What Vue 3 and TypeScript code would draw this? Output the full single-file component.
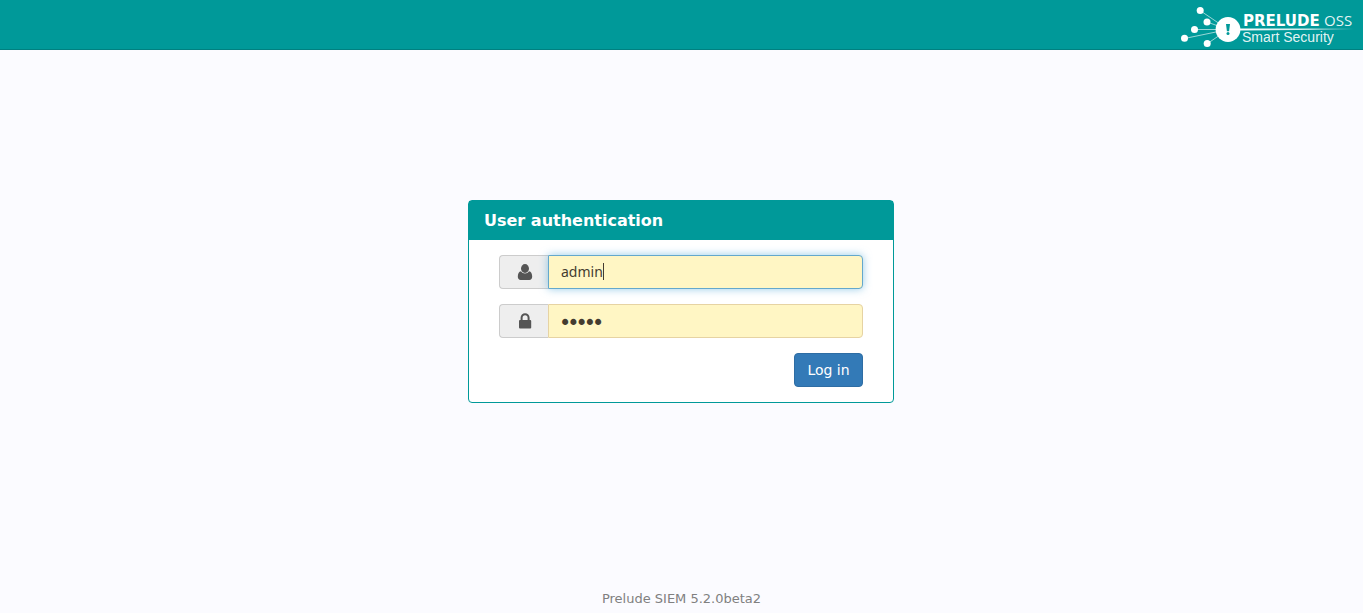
<script setup lang="ts">
import { onMounted, ref } from 'vue'

const username = ref<string>('admin')
const password = ref<string>('admin')
const userField = ref<HTMLInputElement | null>(null)
const version = '5.2.0beta2'

onMounted(() => {
  const field = userField.value
  if (field) {
    field.focus()
    field.setSelectionRange(field.value.length, field.value.length)
  }
})
</script>

<template>
  <div class="page">
    <header class="topbar">
      <svg class="logo" width="174" height="49" viewBox="0 0 174 49" role="img" aria-label="Prelude OSS Smart Security">
        <defs>
          <linearGradient id="rule" x1="0" x2="1" y1="0" y2="0">
            <stop offset="0" stop-color="#fff" />
            <stop offset="0.6" stop-color="#fff" stop-opacity="0.8" />
            <stop offset="1" stop-color="#fff" stop-opacity="0" />
          </linearGradient>
        </defs>
        <g stroke="#fff" stroke-width="0.8" stroke-opacity="0.75">
          <path d="M20 10.500L48 29.500M27 22L48 29.500M14.500 29.500H48M4.500 38.500L48 29.500M27.500 43.500L48 29.500" />
        </g>
        <g fill="#fff">
          <circle cx="20.200" cy="10.500" r="3.500" />
          <circle cx="27" cy="22" r="3.500" />
          <circle cx="14.500" cy="29.500" r="3.500" />
          <circle cx="4.500" cy="38.300" r="3.500" />
          <circle cx="27.200" cy="43.500" r="3.500" />
          <circle cx="48" cy="29.500" r="12.400" />
        </g>
        <path d="M46 24h4l-0.900 7.300h-2.200z" fill="#009999" />
        <circle cx="48" cy="33.600" r="1.500" fill="#009999" />
        <path d="M60 28.500H174V29.500L60 30.500z" fill="url(#rule)" />
        <text class="brand" x="63" y="26">PRELUDE</text>
        <text class="edition" x="144" y="26">OSS</text>
        <text class="tagline" x="62" y="42">Smart Security</text>
      </svg>
    </header>

    <main class="content">
      <form class="panel" @submit.prevent>
        <h1 class="panel-heading">User authentication</h1>
        <div class="panel-body">
          <div class="group">
            <label class="addon" for="login" aria-label="Login">
              <svg width="16" height="16" viewBox="0 0 16 16" aria-hidden="true">
                <ellipse cx="8" cy="4.500" rx="4" ry="4.400" />
                <path d="M4 7.200C1.800 7.600 0.800 9.800 0.800 12.800C0.800 14.800 2 16 3.600 16H12.400C14 16 15.200 14.800 15.200 12.800C15.200 9.800 14.200 7.600 12 7.200C11 8.800 9.500 9.400 8 9.400S5 8.800 4 7.200z" />
              </svg>
            </label>
            <input id="login" ref="userField" v-model="username" class="field field-login" type="text" autocomplete="username" />
          </div>
          <div class="group">
            <label class="addon" for="password" aria-label="Password">
              <svg width="16" height="16" viewBox="0 0 16 16" aria-hidden="true">
                <path d="M4.600 8V4.800a3.500 3.600 0 0 1 7 0V8" fill="none" stroke="#555" stroke-width="2" />
                <rect x="2" y="7" width="12.200" height="8.500" rx="1" />
              </svg>
            </label>
            <input id="password" v-model="password" class="field field-password" type="password" autocomplete="current-password" />
          </div>
          <div class="actions">
            <button class="submit" type="submit">Log in</button>
          </div>
        </div>
      </form>
    </main>

    <footer class="footer">Prelude SIEM {{ version }}</footer>
  </div>
</template>

<style>
body {
  margin: 0;
  background: #fbfbff;
}
</style>

<style scoped>
.page,
.page * {
  box-sizing: border-box;
}
.page {
  display: flex;
  flex-direction: column;
  min-height: 100vh;
  background: #fbfbff;
  font-family: Verdana, "DejaVu Sans", sans-serif;
  font-size: 14px;
  line-height: 20px;
}
.topbar {
  display: flex;
  justify-content: flex-end;
  padding-right: 9px;
  background: #009999;
  border-bottom: 1px solid #008080;
}
.logo {
  display: block;
}
.logo text {
  fill: #fff;
}
.brand {
  font: bold 15px "DejaVu Sans", sans-serif;
}
.edition {
  font: 15px "Open Sans", sans-serif;
  fill-opacity: 0.9;
}
.tagline {
  font: 14px "Liberation Sans", sans-serif;
  fill-opacity: 0.9;
}
.content {
  display: flex;
  flex: 1;
  align-items: flex-start;
  justify-content: center;
  padding: 150px 17px 16px 16px;
}
.panel {
  width: 100%;
  max-width: 426px;
  background: #fff;
  border: 1px solid #009999;
  border-radius: 4px;
}
.panel-heading {
  margin: 0;
  padding: 10px 15px 9px;
  background: #009999;
  color: #fff;
  font-size: 16px;
  font-weight: bold;
  line-height: 20px;
}
.panel-body {
  display: flex;
  flex-direction: column;
  gap: 15px;
  padding: 15px 30px;
}
.group {
  display: flex;
  height: 34px;
}
.addon {
  display: flex;
  align-items: center;
  justify-content: center;
  width: 49px;
  padding-left: 1px;
  background: #eee;
  border: 1px solid #ccc;
  border-right: 0;
  border-radius: 4px 0 0 4px;
}
.addon svg {
  fill: #555;
}
.field {
  flex: 1;
  min-width: 0;
  padding: 5px 12px 7px;
  background: #fff6c4;
  border: 1px solid #e6d3a3;
  border-radius: 0 4px 4px 0;
  outline: 0;
  color: #443c30;
  font: 14px "Noto Sans", sans-serif;
}
.field-login {
  caret-color: transparent;
}
.field-login:focus {
  background: linear-gradient(#443c30, #443c30) 54px 7px / 1px 17px no-repeat #fff6c4;
}
.field-password {
  padding: 7px 12px 5px;
  font-family: "DejaVu Sans", sans-serif;
  -webkit-text-stroke: 2px #443c30;
}
.field:focus {
  border-color: #64a8cc;
  box-shadow: 0 0 8px rgba(82, 168, 216, 0.6);
}
.actions {
  display: flex;
  justify-content: flex-end;
}
.submit {
  min-width: 69px;
  height: 34px;
  padding: 0 12px;
  background: #337ab7;
  border: 1px solid #2e6da4;
  border-radius: 4px;
  color: #fff;
  font: inherit;
  cursor: pointer;
}
.footer {
  padding-bottom: 4px;
  color: #808080;
  font-size: 13px;
  text-align: center;
}
</style>
